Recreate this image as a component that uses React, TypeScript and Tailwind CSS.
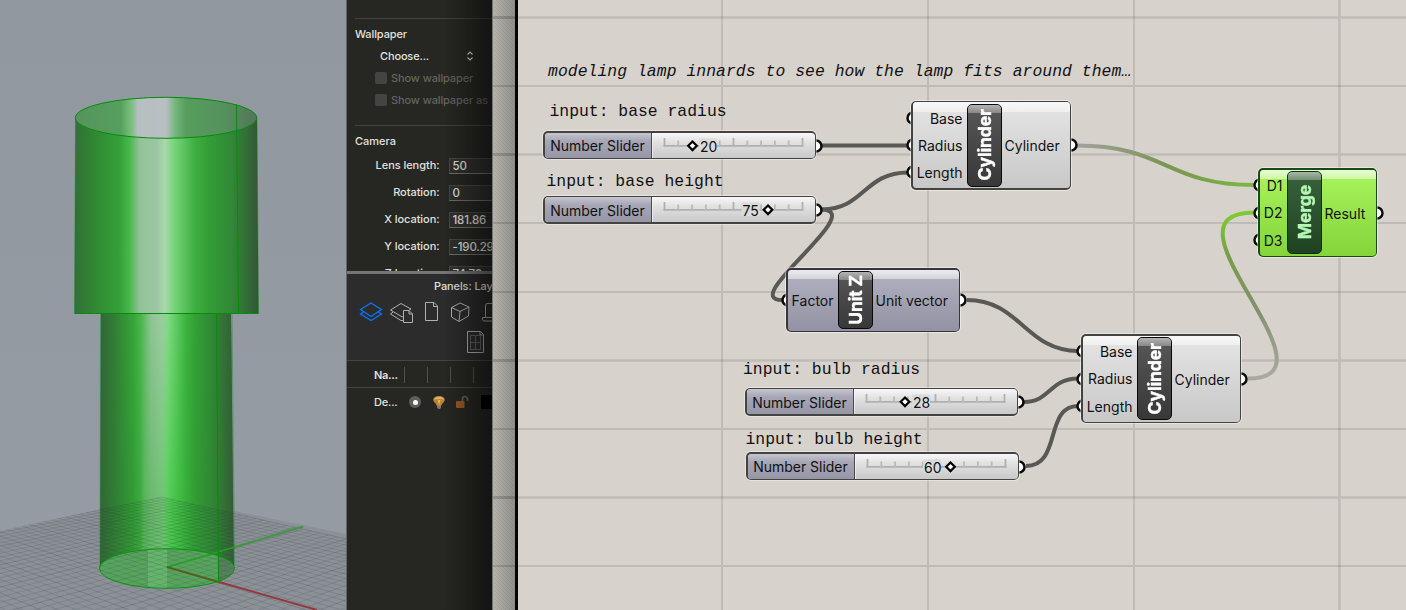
import React from "react";

const gridPoint = (u: number, v: number) => {
  const a = 0.1726 * u;
  const b = 0.2 * v;
  const w = 1 + a + b;
  return [(167 + a * 1091 - b * 665) / w, (567 + (a + b) * 310) / w];
};

const floorLines: { d: string; major: boolean }[] = [];
for (let i = -30; i <= 20; i++) {
  const t = i / 20;
  const [ax, ay] = gridPoint(t, 1);
  const [bx, by] = gridPoint(t, -1.6);
  const [cx, cy] = gridPoint(1, t);
  const [dx, dy] = gridPoint(-1.6, t);
  floorLines.push({ d: `M${ax} ${ay}L${bx} ${by}`, major: i % 5 === 0 });
  floorLines.push({ d: `M${cx} ${cy}L${dx} ${dy}`, major: i % 5 === 0 });
}

function Viewport() {
  return (
    <svg className="block h-[610px] w-[346px] shrink-0" viewBox="0 0 346 610">
      <defs>
        <linearGradient id="sky" x1="0" y1="0" x2="0" y2="1">
          <stop offset="0" stopColor="#91989f" />
          <stop offset="1" stopColor="#959ca3" />
        </linearGradient>
        <linearGradient id="outer">
          <stop offset="0" stopColor="#326f37" />
          <stop offset=".12" stopColor="#308a33" />
          <stop offset=".24" stopColor="#34a038" />
          <stop offset=".3" stopColor="#48b84b" />
          <stop offset=".355" stopColor="#94c29a" />
          <stop offset=".45" stopColor="#9dc6a2" />
          <stop offset=".49" stopColor="#a8d8ac" />
          <stop offset=".54" stopColor="#78d57b" />
          <stop offset=".65" stopColor="#40b043" />
          <stop offset=".72" stopColor="#349f37" />
          <stop offset=".86" stopColor="#318735" />
          <stop offset=".94" stopColor="#326c37" />
          <stop offset="1" stopColor="#335536" />
        </linearGradient>
        <linearGradient id="inside">
          <stop offset="0" stopColor="#54945c" />
          <stop offset=".25" stopColor="#579f5e" />
          <stop offset=".31" stopColor="#79c17f" />
          <stop offset=".345" stopColor="#b6bfbf" />
          <stop offset=".5" stopColor="#b9bec3" />
          <stop offset=".55" stopColor="#73b77a" />
          <stop offset=".61" stopColor="#579d5d" />
          <stop offset=".82" stopColor="#55925d" />
          <stop offset="1" stopColor="#54745a" />
        </linearGradient>
        <linearGradient id="lower">
          <stop offset="0" stopColor="#326638" />
          <stop offset=".1" stopColor="#307c34" />
          <stop offset=".25" stopColor="#329b35" />
          <stop offset=".3" stopColor="#3aa83c" />
          <stop offset=".33" stopColor="#55b458" />
          <stop offset=".38" stopColor="#63b967" />
          <stop offset=".47" stopColor="#6dc271" />
          <stop offset=".5" stopColor="#50ce53" />
          <stop offset=".6" stopColor="#3db940" />
          <stop offset=".7" stopColor="#329e35" />
          <stop offset=".87" stopColor="#308134" />
          <stop offset="1" stopColor="#365b39" />
        </linearGradient>
        <linearGradient id="upperLight">
          <stop offset="0" stopColor="#326638" />
          <stop offset=".1" stopColor="#307c34" />
          <stop offset=".25" stopColor="#37a63a" />
          <stop offset=".31" stopColor="#4cb850" />
          <stop offset=".38" stopColor="#90c495" />
          <stop offset=".46" stopColor="#9ccba1" />
          <stop offset=".5" stopColor="#88da8b" />
          <stop offset=".56" stopColor="#62cf65" />
          <stop offset=".64" stopColor="#3eb341" />
          <stop offset=".72" stopColor="#329e35" />
          <stop offset=".87" stopColor="#308134" />
          <stop offset="1" stopColor="#365b39" />
        </linearGradient>
        <linearGradient id="fade" x1="0" y1="0" x2="0" y2="1">
          <stop offset="0" stopColor="#fff" />
          <stop offset=".8" stopColor="#000" />
        </linearGradient>
        <mask id="fadeMask" maskUnits="userSpaceOnUse" x="95" y="310" width="145" height="280">
          <rect x="95" y="310" width="145" height="280" fill="url(#fade)" />
        </mask>
        <clipPath id="floor">
          <path d="M162 496L0 531V610H346V534Z" />
        </clipPath>
      </defs>
      <rect width="346" height="610" fill="url(#sky)" />
      <path d="M162 496L0 531V610H346V534Z" fill="#8b9197" />
      <path d="M101 314H231L234 569A67.500 20 0 0 0 100 569Z" fill="url(#lower)" />
      <path d="M101 314H231L234 569A67.500 20 0 0 0 100 569Z" fill="url(#upperLight)" mask="url(#fadeMask)" />
      <ellipse cx="167" cy="568.500" rx="67.500" ry="19.800" fill="#58a45f" />
      <path d="M148 550Q157 549 167 549V588Q157 588 148 587Z" fill="#72c378" opacity=".55" />
      <path d="M219 556Q232 560 234 569Q233 577 218 582Z" fill="#547358" opacity=".7" />
      <g clipPath="url(#floor)" fill="none" stroke="#33383d">
        {floorLines.map((l, i) => (
          <path key={i} d={l.d} strokeWidth="0.9" opacity={l.major ? 0.22 : 0.16} />
        ))}
      </g>
      <path d="M167 567L235 547" stroke="#22a022" strokeWidth="1.700" />
      <path d="M235 547L303 526.500" stroke="#3f9740" strokeWidth="2" />
      <path d="M167 567L219 582" stroke="#566022" strokeWidth="2" />
      <path d="M219 582L317 610" stroke="#913a3d" strokeWidth="2" />
      <path d="M75.500 118A91 20.500 0 0 0 257 117L258.500 314H74.500Z" fill="url(#outer)" />
      <ellipse cx="166" cy="117.800" rx="90.700" ry="20.500" fill="url(#inside)" />
      <g fill="none" stroke="#068c0b">
        <ellipse cx="166" cy="117.800" rx="90.700" ry="20.500" />
        <path d="M74.500 313.500H258.500M236.500 104L238.500 313M216.500 314L218.500 582" />
        <path d="M75.500 118L74.500 313M257 117L258.500 313M100.500 314L100 568M232 314L234.500 568" strokeOpacity=".4" />
        <ellipse cx="167" cy="568.500" rx="67.500" ry="19.800" stroke="#07960c" />
      </g>
    </svg>
  );
}

const cameraFields = [
  ["Lens length:", "50"],
  ["Rotation:", "0"],
  ["X location:", "181.86"],
  ["Y location:", "-190.29"],
  ["Z location:", "74.76"],
];

function WallpaperCheck({ label }: { label: string }) {
  return (
    <div className="ml-[20px] flex h-[22px] items-center gap-[4px] font-medium tracking-[-0.12px] text-[#646461]">
      <span className="size-[12px] shrink-0 rounded-[2px] bg-[#444442]" />
      <span>{label}</span>
    </div>
  );
}

function PanelIcons() {
  return (
    <svg className="block h-[63px] w-[145px]" viewBox="347 297 145 63" fill="none" stroke="#b0b0b0" strokeWidth="1">
      <g stroke="#0a78ff" strokeWidth="1.200">
        <path d="M371 303L381.500 309.500L371 316.500L360.500 309.500Z" />
        <path d="M363.500 312L360.500 314L371 320.500L381.500 314L378.500 312" />
      </g>
      <path d="M403 317L400.500 316L390.500 310L401 303.500L411 309L408.500 310.500" />
      <path d="M393 312L390.500 314L401 320.500H403" />
      <path d="M403.500 310.500H409L412.500 314V322.500H403.500Z M409 310.500V314H412.500" />
      <path d="M425.500 302.500H434L437.500 306V320.500H425.500Z M433.500 302.500V306.500H437.500" />
      <path d="M460 303L469 307L468.500 316L459 321.500L451.500 317V307.500Z M451.500 307.500L460 311.500L469 307M460 311.500L459 321.500" />
      <path d="M492 303.500H487Q485.500 303.500 485.500 306V317M492 317.500H482.500Q481.500 321 485 321H492" />
      <path d="M467.500 331.500H480.500L483.500 334.500V352.500H467.500Z M480 331.500V335H483.500" />
      <path d="M470.500 335.500H480.500V349.500H470.500ZM475.500 335.500V349.500M470.500 342.500H480.500" stroke="#626262" />
    </svg>
  );
}

function Inspector() {
  return (
    <aside className="relative flex h-[610px] w-[146px] shrink-0 flex-col overflow-hidden border-l border-[#63666a] bg-[#262622] font-['Inter',sans-serif] text-[11px] leading-[14px] whitespace-nowrap text-[#e1e1df]">
      <div className="h-[271px] overflow-hidden pl-[8px]">
        <div className="mt-[18px] h-px bg-[#42423f]" />
        <h2 className="mt-[8px] font-medium tracking-[-0.1px]">Wallpaper</h2>
        <div className="mt-[4px] flex h-[22px] items-center pl-[25px] font-medium tracking-[-0.15px]">
          <span className="w-[86px]">Choose...</span>
          <svg className="h-[10px] w-[8px]" viewBox="0 0 8 10" fill="none" stroke="#d0d0d0" strokeWidth="1.200">
            <path d="M1.500 3.500L4 1L6.500 3.500M1.500 6.500L4 9L6.500 6.500" />
          </svg>
        </div>
        <WallpaperCheck label="Show wallpaper" />
        <WallpaperCheck label="Show wallpaper as" />
        <div className="mt-[14px] h-px bg-[#42423f]" />
        <h2 className="mt-[8px] font-medium">Camera</h2>
        <div className="mt-[3px]">
          {cameraFields.map(([label, value]) => (
            <div key={label} className="flex h-[27px] items-center font-medium">
              <span className="w-[84.500px] shrink-0 text-right tracking-[-0.05px]">{label}</span>
              <span className="mt-[2px] ml-[9px] h-[16px] w-[70px] shrink-0 border border-[#484845] border-b-[#70706d] bg-[#30302d] pl-[3px] text-[11.500px] tracking-[-0.15px]">
                {value}
              </span>
            </div>
          ))}
        </div>
      </div>
      <div className="h-[3px] bg-[#777577]" />
      <div className="h-[87px] border-b border-[#454545] bg-[#2c2c2d]">
        <div className="h-[23px] pt-[5px] pl-[87px] font-medium tracking-[-0.1px]">Panels: Layers</div>
        <PanelIcons />
      </div>
      <div className="flex h-[27px] items-center border-b border-[#454542] pt-px pl-[27px] font-semibold">
        <span className="w-[29.500px] tracking-[-0.3px]">Na...</span>
        <span className="h-[16px] w-[23px] border-l border-[#50504d]" />
        <span className="h-[16px] w-[23px] border-l border-[#50504d]" />
        <span className="h-[16px] w-[23px] border-l border-[#50504d]" />
        <span className="h-[16px] w-[8px] border-l border-[#50504d]" />
      </div>
      <div className="flex h-[27px] items-center pt-px pl-[27px] font-medium">
        <span className="w-[35px] shrink-0 tracking-[-0.2px]">De...</span>
        <span className="flex size-[12px] shrink-0 items-center justify-center rounded-full bg-[#5e5e5d]">
          <span className="size-[5px] rounded-full bg-white" />
        </span>
        <svg className="ml-[10.500px] h-[15px] w-[14px] shrink-0" viewBox="0 0 14 15">
          <path d="M7 1C3.500 1 1 2.700 1.300 5.200C1.600 7.500 4.500 8.500 5 11H9C9.500 8.500 12.400 7.500 12.700 5.200C13 2.700 10.500 1 7 1Z" fill="#b98535" />
          <path d="M2 4.500Q2.500 2 7 2T12 4.500Q9 3.800 7 4T2 4.500Z" fill="#d7b476" />
          <path d="M6 5L7 10L8.500 5Z" fill="#eeb94d" />
          <path d="M5 11H9V13L7.500 14H6.500L5 13Z" fill="#777875" />
        </svg>
        <svg className="ml-[9px] h-[14px] w-[14px] shrink-0" viewBox="0 0 14 14">
          <path d="M7.500 7V4Q7.500 1.500 10 1.500T12.500 4.500V6" fill="none" stroke="#60605d" strokeWidth="1.700" />
          <rect x="1" y="6" width="8.500" height="7" rx="1" fill="#995b27" />
        </svg>
        <span className="ml-[12px] h-[14px] w-[14px] shrink-0 bg-black" />
      </div>
      <div className="pointer-events-none absolute inset-y-0 right-0 w-[48px] bg-linear-to-r from-transparent to-black/50" />
    </aside>
  );
}

function Divider() {
  return (
    <svg className="block h-[610px] w-[26px] shrink-0" viewBox="492 0 26 610">
      <defs>
        <linearGradient id="edge">
          <stop offset="0" stopColor="#b6b3ad" />
          <stop offset="1" stopColor="#908e88" />
        </linearGradient>
        <pattern id="hatch" width="4" height="4" patternUnits="userSpaceOnUse">
          <path d="M-1 -1L5 5M-1 3L1 5M3 -1L5 1" stroke="#000" strokeOpacity=".07" strokeWidth=".8" />
        </pattern>
      </defs>
      <rect x="492" width="26" height="610" fill="#050505" />
      <rect x="492" width="1" height="610" fill="#747474" />
      <rect x="493" width="22" height="610" fill="url(#edge)" />
      <rect x="493" width="22" height="610" fill="url(#hatch)" />
      <path d="M493 17.500H515M493 154.500H515M493 360.500H515M493 497.500H515" stroke="#000" strokeOpacity=".16" strokeWidth="3" />
      <path d="M493 86H515M493 223H515M493 292H515M493 429H515M493 566H515" stroke="#000" strokeOpacity=".13" strokeWidth="2" />
    </svg>
  );
}

function Wires() {
  return (
    <svg className="absolute inset-0 h-full w-full" viewBox="518 0 888 610" fill="none">
      <defs>
        <linearGradient id="w1" gradientUnits="userSpaceOnUse" x1="1077" y1="0" x2="1254" y2="0">
          <stop stopColor="#a2a19c" />
          <stop offset=".5" stopColor="#799656" />
          <stop offset="1" stopColor="#7bb83c" />
        </linearGradient>
        <linearGradient id="w2" gradientUnits="userSpaceOnUse" x1="1250" y1="379" x2="1240" y2="213">
          <stop stopColor="#aaa8a4" />
          <stop offset=".4" stopColor="#83916f" />
          <stop offset=".75" stopColor="#759d48" />
          <stop offset="1" stopColor="#80ca32" />
        </linearGradient>
      </defs>
      <path d="M518 17.500H1406M518 154.500H1406M518 360.500H1406M518 497.500H1406M1339.500 0V610" stroke="#000" strokeOpacity=".105" strokeWidth="2.600" />
      <path d="M518 86H1406M518 223H1406M518 292H1406M518 429H1406M518 566H1406M722 0V610M928 0V610M1134 0V610" stroke="#000" strokeOpacity=".105" strokeWidth="2" />
      <g stroke="#595855" strokeWidth="4">
        <path d="M822 145.500H908" />
        <path d="M822 209.500C864 209.500 864 172.500 908 172.500" />
        <path d="M822 209.500C868 211 738 300 782 300" />
        <path d="M967 300C1020 300 1026 351 1078 351" />
        <path d="M1024 402C1050 402 1050 378.500 1078 378.500" />
        <path d="M1026 466C1062 466 1044 406 1078 406" />
      </g>
      <path d="M1077 145.500C1166 145.500 1166 185 1254 185" stroke="url(#w1)" strokeWidth="4" />
      <path d="M1248 378.500C1347 378.500 1150 212.500 1254 212.500" stroke="url(#w2)" strokeWidth="4" />
    </svg>
  );
}

function Port({ side, x, y }: { side: "in" | "out"; x: number; y: number }) {
  return (
    <svg className="absolute h-[14px] w-[8px]" style={{ left: side === "in" ? x - 7 : x, top: y - 7 }} viewBox="0 0 8 14">
      <path
        d={side === "in" ? "M8 1.500A5.500 5.500 0 0 0 8 12.500" : "M0 1.500A5.500 5.500 0 0 1 0 12.500"}
        fill="#fff"
        stroke="#0a0a0a"
        strokeWidth="2.500"
      />
    </svg>
  );
}

type SliderProps = { x: number; y: number; value: number; valueX: number; knobX: number };

function NumberSlider({ x, y, value, valueX, knobX }: SliderProps) {
  return (
    <div className="absolute" style={{ left: x - 518, top: y }}>
      <Port side="out" x={272.5} y={14.5} />
      <div className="relative h-[28px] w-[273px] rounded-[5px] bg-[#434342] p-[1.500px] text-[14px] shadow-[0_0_0_1px_rgba(255,255,255,0.4)]">
        <div className="flex h-[25px] w-[270px] overflow-hidden rounded-[3.500px] bg-linear-to-b from-[#f8f8f8] via-[#e2e2e2] via-35% to-[#c9c9c9]">
          <div className="flex w-[107px] shrink-0 items-center justify-center border-r border-[#4a4a4e] bg-linear-to-b from-[#c6c6cf] via-[#a6a6b5] via-32% to-[#9796a7] pt-px tracking-[-0.02px]">
            Number Slider
          </div>
          <svg className="block h-[25px] w-[163px]" viewBox="108.500 1.500 163 25">
            <path d="M108.500 1.500V27" stroke="#fff" strokeOpacity=".5" strokeWidth="2" />
            <path d="M120 14.300H260" stroke="#b0b0b0" strokeWidth="1.700" />
            <path d="M121 6.500V15M190 6.500V15M259 6.500V15" stroke="#b0b0b0" strokeWidth="1.800" />
            <path
              d="M134.800 9V15M148.600 9V15M162.400 9V15M176.200 9V15M203.800 9V15M217.600 9V15M231.400 9V15M245.200 9V15"
              stroke="#bababa"
              strokeWidth="1.800"
            />
            <rect x={valueX - 1} y="7" width="18" height="13.500" fill="#dadada" />
            <path d={`M${knobX} 10L${knobX + 4.300} 14.300L${knobX} 18.600L${knobX - 4.300} 14.300Z`} fill="#fff" stroke="#000" strokeWidth="2.200" />
            <text x={valueX} y="20" fontSize="14" fill="#111">
              {value}
            </text>
          </svg>
        </div>
      </div>
    </div>
  );
}

type NodeProps = {
  x: number;
  y: number;
  w: number;
  h: number;
  badgeX: number;
  name: string;
  inputs: string[];
  output: string;
  tone: "plain" | "violet" | "green";
};

const frames = { plain: "bg-[#434342]", violet: "bg-[#35353b]", green: "bg-[#164b16]" };

const tones = {
  plain: "bg-linear-to-b from-[#e5e5e5] to-[#c8c8c8]",
  violet: "bg-linear-to-b from-[#b3b2c1] to-[#9392a4]",
  green: "bg-linear-to-b from-[#a8f45c] to-[#84d43a]",
};

const badgeTones = {
  plain: "border-[#090909] bg-linear-to-b from-[#585858] to-[#383838] text-white",
  violet: "border-[#090909] bg-linear-to-b from-[#585858] to-[#383838] text-white",
  green: "border-[#102e15] bg-linear-to-b from-[#39633c] to-[#1f4322] text-[#b5f8b6]",
};

function Component({ x, y, w, h, badgeX, name, inputs, output, tone }: NodeProps) {
  const mid = h / 2;
  const firstY = mid - ((inputs.length - 1) * 27.4) / 2;
  return (
    <div className="absolute" style={{ left: x - 518, top: y }}>
      {inputs.map((label, i) => (
        <Port key={label} side="in" x={1} y={firstY + i * 27.4} />
      ))}
      <Port side="out" x={w - 0.5} y={mid} />
      <div
        className={`relative rounded-[5px] p-[1.500px] text-[14px] shadow-[0_0_0_1px_rgba(255,255,255,0.45)] ${frames[tone]}`}
        style={{ width: w, height: h }}
      >
        <div className={`relative flex h-full overflow-hidden rounded-[3.500px] ${tones[tone]}`}>
          <div className="absolute inset-x-0 top-0 h-[9.500px] bg-linear-to-b from-white/75 to-white/45" />
          <div className="relative flex shrink-0 flex-col items-end justify-center pt-px pr-[4.500px]" style={{ width: badgeX - 1.5 }}>
            {inputs.map((label) => (
              <span key={label} className="flex h-[27.400px] items-center whitespace-nowrap">
                {label}
              </span>
            ))}
          </div>
          <div
            className={`relative my-[1.500px] flex w-[35px] shrink-0 items-center justify-center overflow-hidden rounded-[5px] border ${badgeTones[tone]}`}
          >
            <div className="absolute inset-x-0 top-0 h-[8px] bg-linear-to-b from-white/55 to-white/30" />
            <span className="relative rotate-180 text-[17.500px] leading-[20px] font-bold tracking-[-0.15px] whitespace-nowrap [-webkit-text-stroke:0.4px_currentColor] [writing-mode:vertical-rl]">
              {name}
            </span>
          </div>
          <span className="relative flex items-center pt-px pl-[2.500px] whitespace-nowrap">{output}</span>
        </div>
      </div>
    </div>
  );
}

function Note({ x, y, children }: { x: number; y: number; children: React.ReactNode }) {
  return (
    <p className="absolute font-['Liberation_Mono',monospace] text-[16.400px] leading-[20px] whitespace-nowrap" style={{ left: x - 518, top: y }}>
      {children}
    </p>
  );
}

export default function App() {
  return (
    <div className="flex h-[610px] w-[1406px] overflow-hidden bg-[#d6d1cb] text-[#111]">
      <Viewport />
      <Inspector />
      <Divider />
      <main className="relative h-[610px] w-[888px] shrink-0 overflow-hidden bg-[#d7d2cc] font-['Inter',sans-serif]">
        <Wires />
        <Note x={548} y={62}>
          <em className="tracking-[0.05px]">modeling lamp innards to see how the lamp fits around them…</em>
        </Note>
        <Note x={549.5} y={102}>input: base radius</Note>
        <Note x={546.5} y={172}>input: base height</Note>
        <Note x={743} y={360}>input: bulb radius</Note>
        <Note x={745.5} y={430}>input: bulb height</Note>
        <NumberSlider x={543} y={131} value={20} valueX={156.5} knobX={149} />
        <NumberSlider x={543} y={195.500} value={75} valueX={199} knobX={224.5} />
        <NumberSlider x={745} y={387.500} value={28} valueX={167.5} knobX={159.5} />
        <NumberSlider x={746} y={452} value={60} valueX={177.5} knobX={204} />
        <Component x={911} y={100.500} w={160} h={89} badgeX={56} name="Cylinder" inputs={["Base", "Radius", "Length"]} output="Cylinder" tone="plain" />
        <Component x={786} y={268} w={174} h={64} badgeX={52} name="Unit Z" inputs={["Factor"]} output="Unit vector" tone="violet" />
        <Component x={1081} y={334} w={160} h={89} badgeX={56} name="Cylinder" inputs={["Base", "Radius", "Length"]} output="Cylinder" tone="plain" />
        <Component x={1258} y={168} w={119} h={89} badgeX={29} name="Merge" inputs={["D1", "D2", "D3"]} output="Result" tone="green" />
      </main>
    </div>
  );
}
